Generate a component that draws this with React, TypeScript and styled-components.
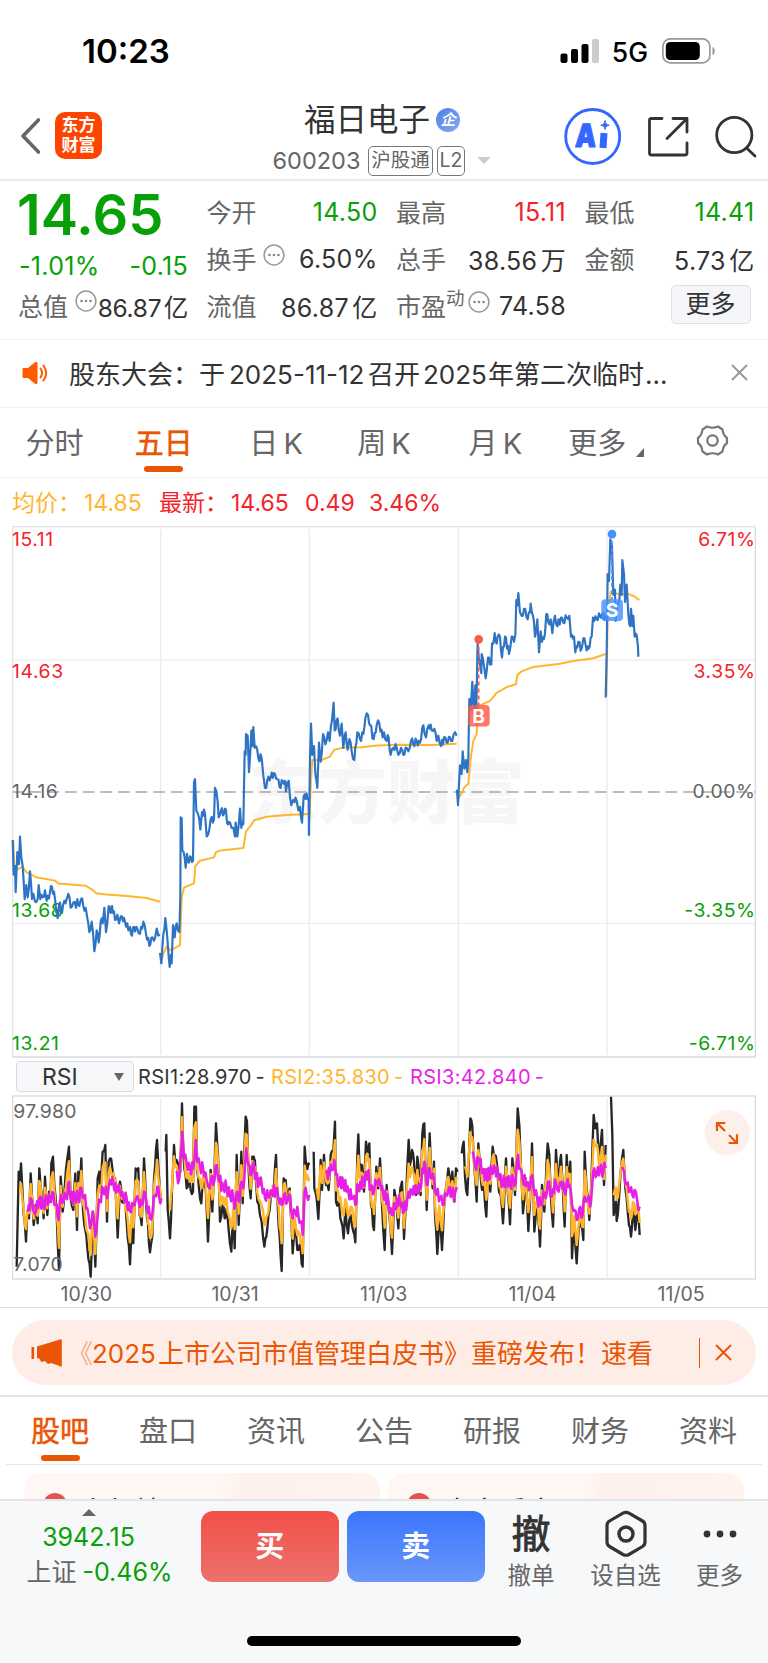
import React from 'react';
import styled, { createGlobalStyle } from 'styled-components';

const GREEN = '#08a008';
const RED = '#f5222a';
const ORANGE = '#ea5504';
const AMBER = '#ffb62e';
const MAGENTA = '#e61fe6';
const FONT = `Inter, "Noto Sans CJK SC", sans-serif`;

const Global = createGlobalStyle`
  * { box-sizing: border-box; }
  body { margin: 0; background: #fff; font-family: ${FONT}; color: #333; }
  svg { display: block; flex: none; }
`;

const Screen = styled.div`
  width: 768px;
  height: 1663px;
  overflow: hidden;
  display: flex;
  flex-direction: column;
  background: #fff;
  white-space: nowrap;
`;

/* status bar */
const StatusBar = styled.div`
  height: 96px;
  flex: none;
  display: flex;
  align-items: center;
  justify-content: space-between;
  padding: 6px 52px 0 82px;
  color: #000;
`;
const Clock = styled.div`
  font-size: 33px;
  font-weight: 600;
  letter-spacing: 0;
`;
const StatusRight = styled.div`
  display: flex;
  align-items: center;
`;
const Network = styled.span`
  font-size: 26.5px;
  font-weight: 500;
  margin: 1px 14px 0 12px;
`;

/* header */
const Header = styled.header`
  height: 85px;
  flex: none;
  display: grid;
  grid-template-columns: 264px 236px 1fr;
  border-bottom: 2px solid #ebebeb;
`;
const HeaderLeft = styled.div`
  display: flex;
  align-items: center;
  padding: 0 0 5px 20px;
  gap: 13px;
`;
const Logo = styled.div`
  width: 47px;
  height: 47px;
  border-radius: 10px;
  background: #ff4400;
  color: #fff;
  font: 700 17px/20px ${FONT};
  text-align: center;
  padding-top: 3px;
`;
const HeaderMid = styled.div`
  display: flex;
  flex-direction: column;
`;
const TitleRow = styled.div`
  display: flex;
  align-items: center;
  height: 46px;
  padding: 0 0 5px 40px;
  font-size: 31.5px;
  gap: 6px;
`;
const Badge = styled.span`
  width: 24px;
  height: 24px;
  margin-top: 6px;
  border-radius: 50%;
  background: linear-gradient(135deg, #4f80ea, #86a8f0);
  color: #fff;
  font: italic 700 15px/23px ${FONT};
  text-align: center;
`;
const CodeRow = styled.div`
  display: flex;
  align-items: center;
  height: 38px;
  padding: 0 0 1px 8.5px;
  color: #666;
  font-size: 23.5px;
`;
const Code = styled.span`
  width: 95.5px;
`;
const Tag = styled.span<{ $w: number }>`
  width: ${(p) => p.$w}px;
  height: 30px;
  border: 1.5px solid #777;
  border-radius: 5px;
  font-size: 19.5px;
  line-height: 27px;
  text-align: center;
  margin-right: 4px;
`;
const Caret = styled.span<{ $up?: boolean; $c: string; $s: number }>`
  width: 0;
  height: 0;
  border-left: ${(p) => p.$s}px solid transparent;
  border-right: ${(p) => p.$s}px solid transparent;
  ${(p) => (p.$up ? 'border-bottom' : 'border-top')}: ${(p) => p.$s}px solid ${(p) => p.$c};
`;
const HeaderRight = styled.div`
  display: flex;
  align-items: center;
  padding: 0 0 6px 63px;
`;

/* quote */
const Quote = styled.section`
  height: 159px;
  flex: none;
  display: grid;
  grid-template-columns: 169px 170px 169px 169px;
  column-gap: 19.5px;
  padding: 7px 0 0 19px;
  border-bottom: 1.5px solid #f0f0f0;
  font-size: 25px;
`;
const QuoteCol = styled.div`
  display: flex;
  flex-direction: column;
`;
const Cell = styled.div<{ $h?: number }>`
  height: ${(p) => p.$h ?? 47}px;
  display: flex;
  align-items: center;
  justify-content: space-between;
`;
const Label = styled.span`
  display: flex;
  color: #666;
  font-size: 25px;
  margin: -2px 0 0 -1px;
`;
const Value = styled.span<{ $c?: string; $tight?: boolean }>`
  color: ${(p) => p.$c ?? '#333'};
  font-size: ${(p) => (p.$tight ? 24.5 : 25)}px;
  letter-spacing: ${(p) => (p.$tight ? -0.3 : 0.3)}px;
  word-spacing: -4px;
`;
const Price = styled.span`
  font-size: 56px;
  font-weight: 600;
  color: ${GREEN};
  line-height: 54px;
  margin-left: -2px;
`;
const Sup = styled.sup`
  font-size: 18.5px;
  line-height: 22px;
  vertical-align: top;
`;
const MoreButton = styled.button`
  width: 80px;
  height: 39px;
  margin-left: auto;
  margin-right: 4px;
  margin-top: -3px;
  padding: 0;
  border: 1.5px solid #dcdfe6;
  border-radius: 5px;
  background: #f5f6fa;
  color: #333;
  font: 25px/35px ${FONT};
`;

/* notice */
const Notice = styled.section`
  height: 68px;
  flex: none;
  display: flex;
  align-items: center;
  padding: 0 20px 2px 22px;
  border-bottom: 1.5px solid #f0f0f0;
`;
const NoticeText = styled.div`
  flex: 1;
  margin-left: 21px;
  font-size: 26px;
  display: flex;
  align-items: baseline;
`;
const Run = styled.span<{ $w: number }>`
  width: ${(p) => p.$w}px;
`;

/* period tabs */
const Periods = styled.nav`
  height: 70px;
  flex: none;
  display: flex;
  border-bottom: 1.5px solid #f0f0f0;
`;
const Tab = styled.div<{ $w: number; $on?: boolean; $lift?: number }>`
  width: ${(p) => p.$w}px;
  display: flex;
  align-items: center;
  justify-content: center;
  position: relative;
  color: ${(p) => (p.$on ? ORANGE : '#666')};
  font-size: 29px;
  -webkit-text-stroke: ${(p) => (p.$on ? 0.5 : 0)}px ${ORANGE};
  padding-bottom: 4px;
  word-spacing: -3px;
  &::after {
    content: '';
    display: ${(p) => (p.$on ? 'block' : 'none')};
    position: absolute;
    left: calc(50% - 19.5px);
    bottom: ${(p) => p.$lift ?? 5}px;
    width: 39px;
    height: 6.5px;
    border-radius: 3px;
    background: ${ORANGE};
  }
`;
const Corner = styled.i`
  width: 0;
  height: 0;
  border-left: 8px solid transparent;
  border-bottom: 9px solid #666;
  margin: 23px 0 0 10px;
`;

/* chart area */
const Legend = styled.div`
  height: 37px;
  flex: none;
  display: grid;
  grid-template-columns: 72px 75px 72px 74px 64px auto;
  align-items: baseline;
  align-content: center;
  justify-content: start;
  padding: 12px 0 0 12px;
  font-size: 23px;
  line-height: 26px;
  color: ${RED};
`;
const Amber = styled.span`
  color: ${AMBER};
`;
const IndicatorRow = styled.div`
  height: 33px;
  flex: none;
  display: flex;
  align-items: center;
  padding: 0 0 0 16px;
  font-size: 20px;
  letter-spacing: 0.3px;
  word-spacing: -2px;
`;
const Select = styled.div`
  width: 118px;
  height: 31px;
  margin-right: 4px;
  border: 1.5px solid #d9dbe0;
  border-radius: 4px;
  background: #f7f8fa;
  display: flex;
  align-items: center;
  justify-content: space-between;
  padding: 0 9px 0 25px;
  font-size: 23px;
  letter-spacing: 0;
`;
const Rsi = styled.span<{ $c: string; $w: number }>`
  width: ${(p) => p.$w}px;
  color: ${(p) => p.$c};
`;
const Dates = styled.div`
  height: 27px;
  flex: none;
  display: grid;
  grid-template-columns: repeat(5, 148.7px);
  padding-left: 12px;
  text-align: center;
  font-size: 19.5px;
  line-height: 26px;
  color: #666;
  border-bottom: 1.5px solid #e0e0e4;
`;

/* banner */
const BannerWrap = styled.section`
  height: 89px;
  flex: none;
  padding: 12px 12px 0;
  border-bottom: 2px solid #e4e4ea;
`;
const Banner = styled.div`
  height: 65px;
  border-radius: 33px;
  background: #fdede6;
  display: flex;
  align-items: center;
  padding: 0 24px 0 19px;
  color: ${ORANGE};
  font-size: 26px;
`;
const BannerText = styled.div`
  flex: 1;
  display: flex;
  align-items: baseline;
  padding: 0 0 3px 4px;
`;
const Faded = styled.span`
  width: 25px;
  opacity: 0.4;
`;
const Divider = styled.i`
  width: 1.5px;
  height: 30px;
  background: ${ORANGE};
  margin-right: 15px;
`;

/* content */
const Sections = styled.nav`
  height: 68px;
  flex: none;
  margin: 0 6px;
  display: flex;
  border-bottom: 1.5px solid #e8e8e8;
`;
const Cards = styled.div`
  height: 34px;
  flex: none;
  display: grid;
  grid-template-columns: 356px 356px;
  gap: 8px;
  padding: 8px 24px 0;
  overflow: hidden;
`;
const Card = styled.div`
  height: 80px;
  border-radius: 16px;
  background: linear-gradient(100deg, #fff7f3 54%, #fef0ed 60%, #fff4f0);
  display: flex;
  align-items: flex-start;
  gap: 12px;
  padding: 20px 0 0 19px;
  font-size: 28px;
  line-height: 38px;
`;
const Dot = styled.i`
  width: 24px;
  height: 24px;
  border-radius: 50%;
  background: #e0564e;
`;

/* bottom bar */
const BottomBar = styled.footer`
  height: 165px;
  flex: none;
  display: flex;
  flex-direction: column;
  background: #f7f8fa;
  border-top: 2px solid #e3e4e6;
`;
const Actions = styled.div`
  height: 135px;
  display: flex;
  align-items: flex-start;
`;
const IndexBox = styled.div`
  width: 201px;
  display: flex;
  flex-direction: column;
  align-items: center;
  padding: 8px 24px 0 0;
`;
const IndexLine = styled.div<{ $shift?: number }>`
  height: 35px;
  line-height: 35px;
  margin-left: ${(p) => p.$shift ?? 0}px;
  color: ${GREEN};
  font-size: 25px;
  display: flex;
  gap: 6px;
  &:nth-of-type(1) { margin-top: 4px; }
`;
const Gray = styled.span`
  color: #666;
`;
const Trade = styled.button<{ $from: string; $to: string }>`
  width: 137.5px;
  height: 71px;
  margin: 10px 8.5px 0 0;
  border: 0;
  padding: 0;
  border-radius: 12px;
  background: linear-gradient(${(p) => p.$from}, ${(p) => p.$to});
  color: #fff;
  font: 700 29px/70px ${FONT};
`;
const Tool = styled.div<{ $w: number }>`
  width: ${(p) => p.$w}px;
  display: flex;
  flex-direction: column;
  align-items: center;
  color: #666;
  font-size: 23.5px;
  line-height: 34px;
`;
const ToolIcon = styled.div`
  height: 58px;
  display: flex;
  align-items: center;
  padding-top: 8px;
  color: #333;
  font-size: 39px;
  -webkit-text-stroke: 0.8px #333;
`;
const HomeBar = styled.div`
  width: 274px;
  height: 10px;
  border-radius: 5px;
  background: #000;
  margin: 0 auto;
`;

type Pt = [number, number];
const pts = (s: string): Pt[] =>
  s.trim().split(/\s+/).map((p) => p.split(',').map(Number) as Pt);

const rough = (line: Pt[], amp: number, step = 2.8, seed = 7): string => {
  let s = seed;
  const rnd = () => {
    s = (s * 16807) % 2147483647;
    return s / 2147483647;
  };
  let sign = 1;
  const out: string[] = [];
  line.forEach(([x, y], i) => {
    if (i) {
      const [px, py] = line[i - 1];
      const n = Math.floor((x - px) / step);
      for (let k = 1; k < n; k++) {
        sign = -sign;
        const t = k / n;
        out.push(`${(px + (x - px) * t).toFixed(1)},${(py + (y - py) * t + sign * amp * (0.3 + 0.9 * rnd())).toFixed(1)}`);
      }
    }
    out.push(`${x},${y}`);
  });
  return out.join(' ');
};
const plain = (line: Pt[]) => line.map((p) => p.join(',')).join(' ');

const valueAt = (line: Pt[], x: number): number => {
  for (let i = 1; i < line.length; i++) {
    if (x <= line[i][0]) {
      const [a, b] = [line[i - 1], line[i]];
      return a[1] + ((b[1] - a[1]) * Math.max(0, x - a[0])) / (b[0] - a[0]);
    }
  }
  return line[line.length - 1][1];
};

/* vertical scale of the price plot */
const sy = (y: number) => y * 1.0427;
const scaled = (line: Pt[]): Pt[] => line.map(([x, y]) => [x, +sy(y).toFixed(1)]);

const PRICE = [
  '38,935 41,1035 45,1010 47,1085 52,970 57,1005 60,925 64,985 68,1010 74,1105 79,1065 83,1100 90,1025 96,1105 100,1090 105,1112 113,1105 116,1065 121,1105 128,1100 135,1080 140,1110 150,1085 156,1070 165,1105 173,1160 180,1115 186,1145 193,1110 200,1105 205,1090 212,1130 220,1115 228,1130 232,1105 238,1125 243,1105 250,1125 257,1130 262,1160 268,1200 275,1170 283,1255 290,1195 296,1230 302,1170 308,1175 313,1130 318,1200 326,1125 332,1145 336,1125 345,1165 352,1150 357,1175 362,1155 375,1170 385,1195 390,1185 396,1210 402,1185 412,1190 420,1205 430,1170 438,1205 448,1240 457,1215 462,1225 470,1190 475,1210 480,1208',
  '480,1260 484,1290 490,1205 496,1160 503,1230 509,1300 513,1265 515,1290 519,1180 524,1215 530,1175 538,1200 541,1100 542,870 545,872 547,965 551,970 557,1015 561,975 567,1000 573,985 579,995 582,770 585,760 589,850 594,860 601,905 606,855 615,860 620,925 628,905 632,875 642,875 645,785 653,825 656,870 663,850 672,860 675,845 684,890 690,885 695,900 700,900 705,925 707,885 712,925 720,845 724,900 730,890 734,680 737,690 738,630 743,635 747,740 754,620 757,665 760,610 764,670 768,665 775,700 785,700 790,750 795,785 802,762 812,755 825,745 832,760 842,785 848,765 855,765 858,795 866,765 874,835 880,820 890,822 895,850 900,840 906,885 911,810 926,815 927,922',
  '927,922 930,700 933,600 937,690 942,665 946,745 952,785 957,655 962,710 969,630 976,660 984,625 989,650 996,590 1001,540 1004,620 1013,585 1020,635 1025,600 1030,670 1037,625 1043,675 1048,645 1055,680 1063,705 1072,625 1080,645 1090,630 1096,585 1104,575 1110,605 1121,645 1130,605 1138,600 1148,640 1152,625 1160,650 1166,640 1172,690 1180,670 1190,670 1195,690 1203,670 1210,690 1220,670 1225,680 1233,650 1240,660 1250,650 1260,655 1270,605 1278,640 1286,605 1295,620 1303,615 1310,650 1315,635 1323,665 1332,640 1340,655 1350,640 1357,650 1365,625 1370,635',
  '1371,790 1374,835 1380,720 1385,745 1388,680 1393,730 1398,705 1402,740 1405,700 1408,530 1412,560 1417,480 1421,570 1426,490 1429,570 1432,400 1433,370 1440,430 1444,455 1445,400 1452,435 1457,470 1464,410 1470,430 1474,430 1476,370 1480,370 1484,340 1490,370 1493,350 1500,350 1506,410 1515,350 1527,400 1535,350 1542,365 1546,345 1549,245 1552,260 1555,225 1560,280 1565,290 1572,270 1583,300 1590,280 1592,255 1599,290 1605,350 1612,300 1617,395 1622,335 1626,365 1635,340 1639,285 1645,310 1652,300 1657,340 1665,290 1672,320 1683,295 1690,310 1700,295 1708,290 1713,350 1722,350 1726,395 1735,365 1742,390 1750,355 1757,375 1766,385 1775,350 1779,295 1790,300 1800,292 1817,290',
  '1817,525 1820,400 1823,170 1827,190 1831,70 1836,90 1840,230 1845,215 1847,305 1853,260 1858,245 1861,200 1865,230 1867,130 1872,170 1875,250 1880,200 1885,285 1891,320 1893,270 1898,320 1900,290 1904,350 1910,345 1914,380 1915,408',
].map(pts).map(scaled);

const AVERAGE = [
  '40,935 42,1005 50,1020 68,1012 80,1028 108,1042 165,1052 175,1060 258,1067 280,1080 288,1088 320,1092 380,1096 440,1102 480,1113',
  '482,1290 490,1262 500,1242 512,1252 540,1238 545,1100 552,1072 582,1060 586,1010 600,995 642,985 648,970 662,965 730,958 738,910 755,890 762,878 800,868 860,863 926,860',
  '928,880 933,760 937,705 965,705 990,695 1002,676 1025,670 1085,668 1130,663 1200,661 1300,662 1370,658',
  '1373,820 1385,800 1392,785 1405,773 1412,700 1420,650 1430,630 1435,550 1470,535 1490,512 1520,495 1548,487 1552,460 1565,450 1600,437 1680,428 1720,420 1780,412 1817,400',
  '1819,520 1823,300 1832,222 1860,228 1885,227 1905,235 1918,245',
].map(pts).map(scaled);

const RSI1 = [
  '50,635 56,350 60,375 63,325 68,420 78,560 82,470 87,490 92,355 97,440 101,510 107,450 113,505 118,340 124,410 131,490 135,365 142,480 147,410 152,420 154,325 159,305 163,390 170,480 177,645 182,365 188,470 194,400 202,310 207,275 212,430 220,465 226,355 231,525 235,350 240,390 244,310 249,465 256,525 262,580 272,665 279,470 286,635 293,370 298,350 302,400 308,290 316,270 321,500 326,320 330,310 337,340 345,370 353,548 360,380 366,440 373,420 380,500 390,628 396,480 400,565 407,340 415,340 419,480 425,510 432,310 438,440 450,592 457,545 462,370 471,255 476,350 483,440',
  '497,290 499,240 503,460 510,550 522,270 526,325 530,315 538,360 541,350 546,145 550,300 560,400 566,370 572,405 579,410 583,155 588,155 591,350 597,400 604,445 610,370 617,400 624,560 632,345 637,470 643,350 648,205 654,300 660,500 668,450 674,490 680,460 686,525 694,590 700,480 704,580 710,300 716,510 724,290 728,445 734,260 737,185 741,200 745,330 752,430 757,305 765,320 772,440 780,480 785,500 793,575 802,520 812,430 822,395 828,300 833,450 845,648 851,370 857,375 862,440 869,400 878,595 884,500 892,585 899,570 908,635 914,275 919,340 928,330',
  '941,290 943,400 950,430 955,492 962,315 966,405 972,300 978,390 986,405 992,300 1000,290 1005,200 1008,440 1015,440 1024,500 1031,550 1036,460 1044,535 1052,480 1060,530 1066,562 1072,300 1075,238 1079,350 1086,330 1092,410 1098,260 1104,290 1108,265 1113,450 1122,525 1129,335 1134,400 1140,310 1146,450 1154,585 1160,390 1168,480 1176,597 1183,405 1190,460 1195,520 1201,400 1206,380 1212,552 1220,380 1226,255 1230,330 1236,285 1242,320 1248,420 1252,305 1262,420 1267,235 1273,205 1280,465 1289,235 1293,340 1298,400 1302,320 1305,480 1312,597 1318,470 1326,585 1332,460 1338,400 1345,340 1352,400 1357,350 1363,440 1368,340 1373,350',
  '1385,295 1391,260 1395,365 1402,420 1407,300 1411,190 1417,215 1423,340 1430,440 1435,265 1440,330 1446,405 1452,395 1459,485 1465,340 1471,410 1478,275 1484,300 1491,330 1497,410 1502,420 1509,505 1518,310 1524,420 1530,508 1537,310 1545,420 1553,160 1558,210 1563,340 1569,475 1577,370 1585,528 1590,440 1596,265 1603,530 1609,450 1614,480 1620,575 1626,390 1633,470 1643,265 1648,300 1652,410 1659,515 1668,285 1674,400 1683,300 1688,390 1694,515 1700,300 1705,380 1711,320 1716,610 1722,500 1730,625 1738,500 1744,510 1750,555 1754,290 1760,400 1768,495 1774,380 1781,180 1786,220 1791,205 1798,330 1806,225 1812,390 1817,270',
  '1833,125 1837,240 1841,480 1848,440 1850,498 1857,430 1862,350 1870,285 1876,400 1884,480 1893,545 1899,460 1906,525 1912,450 1919,540',
].map(pts);

const RSI3 = [
  '83,470 92,430 100,465 108,470 118,430 130,455 140,430 150,440 160,415 167,450 176,495 183,420 190,440 198,430 207,380 213,435 225,425 235,430 244,400 252,430 262,460 270,520 278,470 286,545 294,470 300,440 309,400 317,395 322,430 330,375 340,385 352,410 360,410 370,430 380,430 390,470 400,450 408,430 416,440 425,450 432,410 440,450 450,490 458,470 465,420 472,395 478,430 484,430',
  '527,350 538,370 547,230 552,310 560,325 570,340 580,340 587,255 592,320 600,335 610,345 620,375 625,395 633,370 640,390 650,330 658,380 670,395 680,400 690,420 700,430 706,450 712,410 718,440 725,380 730,400 739,280 745,330 752,360 758,330 768,370 785,385 795,430 805,425 815,415 828,400 835,430 845,450 852,420 862,440 870,420 878,490 886,470 895,480 902,500 908,540 914,410 920,420 928,420',
  '978,355 995,345 1003,315 1008,360 1018,385 1030,385 1045,410 1058,430 1066,450 1075,390 1090,385 1103,350 1112,400 1122,410 1130,380 1140,380 1150,420 1165,440 1176,480 1185,450 1200,440 1212,470 1222,430 1235,410 1250,400 1260,405 1273,320 1280,390 1289,340 1296,370 1302,370 1310,420 1320,430 1328,450 1338,420 1346,400 1355,420 1365,415 1373,400',
  '1418,290 1425,330 1436,310 1448,350 1460,365 1475,350 1485,340 1495,360 1508,390 1518,370 1530,390 1540,370 1547,385 1554,300 1560,340 1568,375 1580,385 1590,400 1597,360 1604,420 1612,435 1622,450 1630,410 1637,430 1644,380 1655,425 1668,385 1676,410 1684,380 1693,410 1700,385 1709,390 1716,450 1724,465 1730,495 1738,460 1748,480 1754,425 1762,435 1770,455 1776,400 1783,340 1790,360 1800,340 1810,350 1817,340',
  '1864,340 1872,350 1880,385 1890,410 1897,420 1904,405 1912,440 1919,455',
].map(pts);

const RSI2 = RSI1.map((day, i) =>
  day
    .filter((p) => p[0] > day[0][0] + 7)
    .map(([x, y]): Pt => [x, Math.round(0.58 * y + 0.42 * valueAt(RSI3[i], x))])
);

const DAY_X = [482, 928, 1375, 1821];
const AXIS = [
  { y: 88, l: '15.11', r: '6.71%', c: RED },
  { y: 469, l: '14.63', r: '3.35%', c: RED },
  { y: 814, l: '14.16', r: '0.00%', c: '#666' },
  { y: 1158, l: '13.68', r: '-3.35%', c: GREEN },
  { y: 1539, l: '13.21', r: '-6.71%', c: GREEN },
];

const Marker = ({ x, top, y, color, text }: { x: number; top: number; y: number; color: string; text: string }) => (
  <g>
    <line x1={x} x2={x} y1={top} y2={y - 30} stroke={color} strokeWidth="5" strokeDasharray="12 9" />
    <circle cx={x} cy={top} r="13" fill={color} />
    <rect x={x - 32} y={y - 32} width="65" height="65" rx="12" fill={color} fillOpacity="0.82" />
    <text x={x} y={y + 21} fontSize="58" fontWeight="700" fill="#fff" textAnchor="middle">{text}</text>
  </g>
);

const PriceChart = () => (
  <svg width="768" height="545" viewBox="0 0 2304 1635" fontFamily={FONT} fill="none" strokeLinejoin="round">
    <text x="746" y="908" fontSize="207" fontWeight="900" fill="#000" fillOpacity="0.035">东方财富</text>
    {DAY_X.map((x) => <line key={x} x1={x} x2={x} y1="42" y2="1619" stroke="#e9ebf3" strokeWidth="4" />)}
    {[418, 1175].map((y) => <line key={y} x1="38" x2="2265" y1={sy(y)} y2={sy(y)} stroke="#ededf3" strokeWidth="4" />)}
    <path d="M38 1626V35H2266" stroke="#e2e2e6" strokeWidth="4" />
    <path d="M38 1626H2266V35" stroke="#d9dadf" strokeWidth="4" />
    <line x1="38" x2="2265" y1={sy(797)} y2={sy(797)} stroke="#a8a8a8" strokeWidth="5" strokeDasharray="35 18" strokeDashoffset="2" />
    {AXIS.map((a) => (
      <g key={a.l} fill={a.c} fontSize="58" letterSpacing="1.8">
        <text x="36" y={sy(a.y)}>{a.l}</text>
        <text x="2267" y={sy(a.y)} textAnchor="end">{a.r}</text>
      </g>
    ))}
    {AVERAGE.map((d, i) => <polyline key={i} points={plain(d)} stroke={AMBER} strokeWidth="6" />)}
    {PRICE.map((d, i) => <polyline key={i} points={rough(d, 11)} stroke="#2f74c4" strokeWidth="6.5" />)}
    <Marker x={1436} top={sy(358)} y={sy(577)} color="#fb5a4b" text="B" />
    <Marker x={1836} top={sy(55)} y={sy(273)} color="#4692fb" text="S" />
  </svg>
);

const RsiChart = () => (
  <svg width="768" height="188" viewBox="0 114 2304 564" fontFamily={FONT} fill="none" strokeLinejoin="round">
    {DAY_X.map((x) => <line key={x} x1={x} x2={x} y1="130" y2="668" stroke="#e9ebf3" strokeWidth="4" />)}
    <path d="M38 672V123M2266 672V123" stroke="#dcdde2" strokeWidth="4" />
    <path d="M36 123H2268M36 672H2268" stroke="#dcdde2" strokeWidth="5" />
    {RSI1.map((d, i) => <polyline key={i} points={rough(d, 12)} stroke="#262626" strokeWidth="7" />)}
    {RSI2.map((d, i) => <polyline key={i} points={rough(d, 14)} stroke={AMBER} strokeWidth="7.5" />)}
    {RSI3.map((d, i) => <polyline key={i} points={rough(d, 19)} stroke={MAGENTA} strokeWidth="7.5" />)}
    <g fill="#666" fontSize="58" letterSpacing="0.8">
      <text x="40" y="188">97.980</text>
      <text x="40" y="648">7.070</text>
    </g>
    <circle cx="2182" cy="233" r="68" fill="#fdf0ea" />
    <path d="M2151 228V204H2176M2152 205L2175 228M2211 238V264H2186M2210 263L2187 240" stroke={ORANGE} strokeWidth="6.5" strokeLinejoin="miter" />
  </svg>
);

const InfoDots = ({ m }: { m: string }) => (
  <svg width="22" height="22" viewBox="0 0 22 22" style={{ margin: m }}>
    <circle cx="11" cy="11" r="9.9" fill="none" stroke="#999" strokeWidth="1.5" />
    <g fill="#888"><circle cx="6.5" cy="11" r="1.3" /><circle cx="11" cy="11" r="1.3" /><circle cx="15.5" cy="11" r="1.3" /></g>
  </svg>
);

const Cross = ({ color }: { color: string }) => (
  <svg width="17" height="17" viewBox="0 0 17 17"><path d="M1 1L16 16M16 1L1 16" stroke={color} strokeWidth="1.9" /></svg>
);

export default function App() {
  return (
    <Screen>
      <Global />
      <StatusBar>
        <Clock>10:23</Clock>
        <StatusRight>
          <svg width="40" height="26" viewBox="0 0 40 26">
            <rect x="0.5" y="15.5" width="7" height="9.5" rx="2" />
            <rect x="11" y="11" width="7" height="14" rx="2" />
            <rect x="21.5" y="6" width="7" height="19" rx="2" />
            <rect x="32" y="1" width="7" height="24" rx="2" fill="#ccc" />
          </svg>
          <Network>5G</Network>
          <svg width="54" height="26" viewBox="0 0 54 26">
            <rect x="0.9" y="0.9" width="47" height="24" rx="7.5" fill="none" stroke="#999" strokeWidth="1.7" />
            <rect x="3.8" y="4" width="34" height="18" rx="4.5" />
            <path d="M50.5 9c3 1 3 7 0 8z" fill="#999" />
          </svg>
        </StatusRight>
      </StatusBar>

      <Header>
        <HeaderLeft>
          <svg width="22" height="38" viewBox="0 0 22 38">
            <path d="M18.5 3L3 19L18.5 35" fill="none" stroke="#666" strokeWidth="3.6" strokeLinecap="round" strokeLinejoin="round" />
          </svg>
          <Logo>东方<br />财富</Logo>
        </HeaderLeft>
        <HeaderMid>
          <TitleRow>福日电子<Badge>企</Badge></TitleRow>
          <CodeRow>
            <Code>600203</Code>
            <Tag $w={65}>沪股通</Tag>
            <Tag $w={28}>L2</Tag>
            <Caret $c="#ccc" $s={7} style={{ marginLeft: 8 }} />
          </CodeRow>
        </HeaderMid>
        <HeaderRight>
          <svg width="205" height="60" viewBox="0 0 205 60" fill="none" stroke="#333" strokeWidth="2.8" strokeLinecap="round" strokeLinejoin="round">
            <circle cx="29.700" cy="31.500" r="27" stroke="#3366ff" strokeWidth="2.8" />
            <text x="14" y="42.500" fontFamily="Inter, sans-serif" fontSize="32" fontWeight="900" fill="#3366ff" stroke="#3366ff" strokeWidth="1" textLength="21" lengthAdjust="spacingAndGlyphs" transform="skewX(-3)">A</text>
            <path d="M41 28l-1 15" stroke="#3366ff" strokeWidth="7" strokeLinecap="butt" />
            <path d="M42 16c.7 3 1.2 3.500 4.200 4.200c-3 .7-3.500 1.200-4.200 4.200c-.7-3-1.200-3.500-4.200-4.200c3-.7 3.500-1.200 4.200-4.200z" fill="#3366ff" stroke="#3366ff" strokeWidth="1" />
            <path d="M99 13.500H88.500q-2 0-2 2V48q0 2 2 2H122q2 0 2-2V38M110 13.500H124V27M124 13.500L104 33.500" />
            <circle cx="171.300" cy="30" r="17.600" />
            <path d="M183.500 43L192 51" />
          </svg>
        </HeaderRight>
      </Header>

      <Quote>
        <QuoteCol>
          <Cell $h={54}><Price>14.65</Price></Cell>
          <Cell $h={48}><Value $c={GREEN}>-1.01%</Value><Value $c={GREEN}>-0.15</Value></Cell>
          <Cell $h={32}>
            <Label>总值<InfoDots m="3px 0 0 7px" /></Label>
            <Value $tight>86.87 亿</Value>
          </Cell>
        </QuoteCol>
        <QuoteCol>
          <Cell><Label>今开</Label><Value $c={GREEN}>14.50</Value></Cell>
          <Cell><Label>换手<InfoDots m="4px 0 0 6px" /></Label><Value>6.50%</Value></Cell>
          <Cell><Label>流值</Label><Value>86.87 亿</Value></Cell>
        </QuoteCol>
        <QuoteCol>
          <Cell><Label>最高</Label><Value $c={RED}>15.11</Value></Cell>
          <Cell><Label>总手</Label><Value>38.56 万</Value></Cell>
          <Cell><Label>市盈<Sup>动</Sup><InfoDots m="4px 0 0 3px" /></Label><Value>74.58</Value></Cell>
        </QuoteCol>
        <QuoteCol>
          <Cell><Label>最低</Label><Value $c={GREEN}>14.41</Value></Cell>
          <Cell><Label>金额</Label><Value>5.73 亿</Value></Cell>
          <Cell><MoreButton>更多</MoreButton></Cell>
        </QuoteCol>
      </Quote>

      <Notice>
        <svg width="26" height="24" viewBox="0 0 26 24">
          <path d="M1.500 7H6L13 1.200Q15.500 0 15.500 2.500V21.500Q15.500 24 13 22.800L6 17H1.500Q0.500 17 0.500 16V8Q0.500 7 1.500 7Z" fill="#ff5a00" />
          <path d="M18.500 7.500q3 4.500 0 9M21.500 4.500q5.500 7.500 0 15" fill="none" stroke="#ff5a00" strokeWidth="2" strokeLinecap="round" />
        </svg>
        <NoticeText>
          <Run $w={130}>股东大会：</Run>
          <Run $w={30}>于</Run>
          <Run $w={139}>2025-11-12</Run>
          <Run $w={55}>召开</Run>
          <Run $w={65}>2025</Run>
          <Run $w={157}>年第二次临时</Run>
          <span>...</span>
        </NoticeText>
        <Cross color="#999" />
      </Notice>

      <Periods>
        <Tab $w={109}>分时</Tab>
        <Tab $w={110} $on>五日</Tab>
        <Tab $w={115}>日 K</Tab>
        <Tab $w={101}>周 K</Tab>
        <Tab $w={122}>月 K</Tab>
        <Tab $w={100}>更多<Corner /></Tab>
        <Tab $w={112}>
          <svg width="33" height="33" viewBox="0 0 33 33" fill="none" stroke="#777" strokeWidth="2.200" strokeLinejoin="round">
            <path d="M11 2.500Q16.500 5 22 2.500L26.500 5.500Q27 11 31 14V19Q27 22 26.500 27.500L22 30.500Q16.500 28 11 30.500L6.500 27.500Q6 22 2 19V14Q6 11 6.500 5.500Z" />
            <circle cx="16.500" cy="16.500" r="5.200" />
          </svg>
        </Tab>
      </Periods>

      <Legend>
        <Amber>均价：</Amber><Amber>14.85</Amber>
        <span>最新：</span><span>14.65</span><span>0.49</span><span>3.46%</span>
      </Legend>
      <PriceChart />
      <IndicatorRow>
        <Select>RSI<Caret $c="#666" $s={5} style={{ borderTopWidth: 8 }} /></Select>
        <Rsi $c="#333" $w={133}>RSI1:28.970 -</Rsi>
        <Rsi $c={AMBER} $w={139}>RSI2:35.830 -</Rsi>
        <Rsi $c={MAGENTA} $w={140}>RSI3:42.840 -</Rsi>
      </IndicatorRow>
      <RsiChart />
      <Dates>
        <span>10/30</span><span>10/31</span><span>11/03</span><span>11/04</span><span>11/05</span>
      </Dates>

      <BannerWrap>
        <Banner>
          <svg width="32" height="28" viewBox="0 0 32 28" fill={ORANGE}>
            <rect x="0.500" y="8" width="2.600" height="12" />
            <path d="M6 7.500L29 0.500V27L20 24l-3 1l-3-3l-4 1l-1-3l-3-1z" />
            <rect x="28.200" y="0.500" width="2.600" height="27" />
          </svg>
          <BannerText>
            <Faded>《</Faded>
            <Run $w={66}>2025</Run>
            <Run $w={313}>上市公司市值管理白皮书》</Run>
            <Run $w={130}>重磅发布！</Run>
            <span>速看</span>
          </BannerText>
          <Divider />
          <Cross color={ORANGE} />
        </Banner>
      </BannerWrap>

      <Sections>
        {['股吧', '盘口', '资讯', '公告', '研报', '财务', '资料'].map((t, i) => (
          <Tab key={t} $w={108} $on={i === 0} $lift={3}>{t}</Tab>
        ))}
      </Sections>
      <Cards>
        <Card><Dot />人气榜</Card>
        <Card><Dot />大家看盘</Card>
      </Cards>

      <BottomBar>
        <Actions>
          <IndexBox>
            <Caret $up $c="#666" $s={7} />
            <IndexLine>3942.15</IndexLine>
            <IndexLine $shift={22}><Gray>上证</Gray>-0.46%</IndexLine>
          </IndexBox>
          <Trade $from="#f34f49" $to="#eb726c">买</Trade>
          <Trade $from="#3a75fb" $to="#6b97fc">卖</Trade>
          <Tool $w={76}><ToolIcon>撤</ToolIcon>撤单</Tool>
          <Tool $w={113}>
            <ToolIcon>
              <svg width="44" height="48" viewBox="0 0 44 48" fill="none" stroke="#333" strokeWidth="3.200">
                <path d="M19 3.200Q22 1.500 25 3.200L38.500 11Q41 12.500 41 15.500V32Q41 35 38.500 36.500L25 44.500Q22 46 19 44.500L5.500 36.500Q3 35 3 32V15.500Q3 12.500 5.500 11Z" />
                <circle cx="22" cy="24" r="7" strokeWidth="3.400" />
              </svg>
            </ToolIcon>
            设自选
          </Tool>
          <Tool $w={75}>
            <ToolIcon>
              <svg width="34" height="8" viewBox="0 0 34 8" fill="#333">
                <circle cx="4" cy="4" r="3.400" /><circle cx="17" cy="4" r="3.400" /><circle cx="30" cy="4" r="3.400" />
              </svg>
            </ToolIcon>
            更多
          </Tool>
        </Actions>
        <HomeBar />
      </BottomBar>
    </Screen>
  );
}
